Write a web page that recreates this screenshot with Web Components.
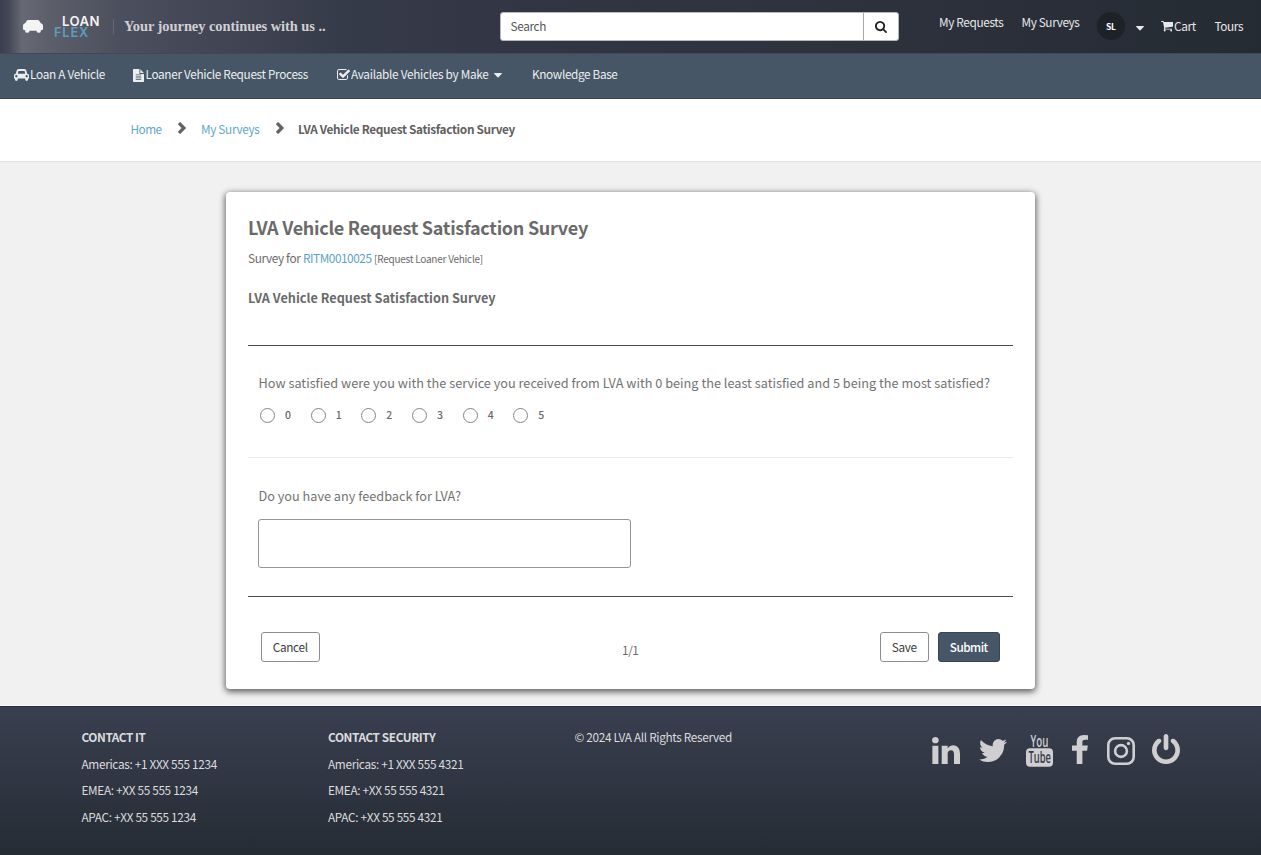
<!DOCTYPE html>
<html lang="en">
<head>
<meta charset="utf-8">
<title>LVA Vehicle Request Satisfaction Survey</title>
<style>
body{margin:0;font-family:"Noto Sans CJK SC","Noto Sans",sans-serif;font-size:11.8px;line-height:20px;background:#f1f1f1;color:#666}
</style>
</head>
<body>
<portal-app></portal-app>
<script>
const define = (name, html, ready) => {
  const t = document.createElement('template');
  t.innerHTML = html;
  customElements.define(name, class extends HTMLElement {
    connectedCallback() {
      if (this.shadowRoot) return;
      this.attachShadow({mode: 'open'}).append(t.content.cloneNode(true));
      if (ready) ready(this, this.shadowRoot);
    }
  });
};

/* A single line of text tracked to a fixed measure (w, in px). */
define('fit-text', `<style>:host{display:block;white-space:nowrap;flex:none}span{display:inline-block}</style><span><slot></slot></span>`, (el, root) => {
  const target = parseFloat(el.getAttribute('w'));
  const span = root.querySelector('span');
  if (!target) return;
  const n = el.textContent.length;
  span.style.letterSpacing = ((target - .5 - span.getBoundingClientRect().width) / n) + 'px';
  el.style.width = target + 'px';
});

/* Icons: [viewBox, markup] */
const ICONS = {
  search: ['64 128 1664 1664', '<path d="M1216 832q0-185-131.5-316.5t-316.5-131.5-316.5 131.5-131.5 316.5 131.5 316.5 316.5 131.5 316.5-131.5 131.5-316.5zm512 832q0 52-38 90t-90 38q-54 0-90-38l-343-342q-179 124-399 124-143 0-273.5-55.5t-225-150-150-225-55.5-273.5 55.5-273.5 150-225 225-150 273.5-55.5 273.5 55.5 225 150 150 225 55.5 273.5q0 220-124 399l343 343q37 37 37 90z"/>'],
  twitter: ['108 256 1576 1280', '<path d="M1684 408q-67 98-162 167 1 14 1 42 0 130-38 259.5t-115.5 248.5-184.5 210.5-258 146-323 54.5q-271 0-496-145 35 4 78 4 225 0 401-138-105-2-188-64.5t-114-159.5q33 5 61 5 43 0 85-11-112-23-185.5-111.5t-73.5-205.5v-4q68 38 146 41-66-44-105-115t-39-154q0-88 44-163 121 149 294.5 238.5t371.5 99.5q-8-38-8-74 0-134 94.5-228.5t228.5-94.5q140 0 236 102 109-21 205-78-37 115-142 178 93-10 186-50z"/>'],
  facebook: ['479 0 864 1664', '<path d="M1343 12v264h-157q-86 0-116 36t-30 108v189h293l-39 296h-254v759h-306v-759h-255v-296h255v-218q0-186 104-288.5t277-102.5q147 0 228 12z"/>'],
  linkedin: ['127 148 1537 1468', '<path d="M477 625v991h-330v-991h330zm21-306q1 73-50.5 122t-135.5 49h-2q-82 0-132-49t-50-122q0-74 51.5-122.5t134.5-48.5 133 48.5 51 122.5zm1166 729v568h-329v-530q0-105-40.5-164.5t-126.5-59.5q-63 0-105.5 34.5t-63.5 85.5q-11 30-11 81v553h-329q2-399 2-647t-1-296l-1-48h329v144h-2q20-32 41-56t56.5-52 87-43.5 114.5-15.5q171 0 275 113.5t104 332.5z"/>'],
  power: ['128 0 1536 1664', '<path d="M1664 896q0 156-61 298t-164 245-245 164-298 61-298-61-245-164-164-245-61-298q0-182 80.5-343t226.5-270q43-32 95.5-25t83.5 50q32 42 24.5 94.5t-49.5 84.5q-98 74-151.5 181t-53.5 228q0 104 40.5 198.5t109.5 163.5 163.5 109.5 198.5 40.5 198.5-40.5 163.5-109.5 109.5-163.5 40.5-198.5q0-121-53.5-228t-151.5-181q-42-32-49.5-84.5t24.5-94.5q31-43 84-50t95 25q146 109 226.5 270t80.5 343zm-640-768v640q0 52-38 90t-90 38-90-38-38-90v-640q0-52 38-90t90-38 90 38 38 90z"/>'],
  instagram: ['0 0 28 28', '<rect x="1.3" y="1.3" width="25.4" height="25.4" rx="6.8" fill="none" stroke="currentColor" stroke-width="2.6"/><circle cx="14" cy="14" r="5.9" fill="none" stroke="currentColor" stroke-width="2.6"/><circle cx="21.5" cy="6.5" r="1.7"/>'],
  youtube: ['0 0 27 33', '<g font-family="Open Sans" font-weight="600"><text x="4.6" y="12.700" font-size="17" textLength="17.8" lengthAdjust="spacingAndGlyphs">You</text><rect y="14.200" width="27" height="18.500" rx="4"/><text x="2.4" y="29.2" font-size="15.800" textLength="22.5" lengthAdjust="spacingAndGlyphs" fill="#373c4b">Tube</text></g>'],
  cart: ['64 256 1664 1408', '<path d="M704 1536q0 52-38 90t-90 38-90-38-38-90 38-90 90-38 90 38 38 90zm896 0q0 52-38 90t-90 38-90-38-38-90 38-90 90-38 90 38 38 90zm128-1088v512q0 24-16.5 42.5t-40.5 21.5l-1044 122q13 60 13 70 0 16-24 64h920q26 0 45 19t19 45-19 45-45 19h-1024q-26 0-45-19t-19-45q0-11 8-31.5t16-36 21.5-40 15.5-29.5l-177-823h-204q-26 0-45-19t-19-45 19-45 45-19h256q16 0 28.5 6.5t19.5 15.5 13 24.5 8 26 5.5 29.5 4.5 26h1201q26 0 45 19t19 45z"/>'],
  check: ['64 128 1664 1408', '<path d="M1472 930v318q0 119-84.5 203.5t-203.5 84.5h-832q-119 0-203.5-84.5t-84.5-203.5v-832q0-119 84.5-203.5t203.5-84.5h832q63 0 117 25 15 7 18 23 3 17-9 29l-49 49q-10 10-23 10-3 0-9-2-23-6-45-6h-832q-66 0-113 47t-47 113v832q0 66 47 113t113 47h832q66 0 113-47t47-113v-254q0-13 9-22l64-64q10-10 23-10 6 0 12 3 20 8 20 29zm231-489l-814 814q-24 24-57 24t-57-24l-430-430q-24-24-24-57t24-57l110-110q24-24 57-24t57 24l263 263 647-647q24-24 57-24t57 24l110 110q24 24 24 57t-24 57z"/>'],
  car: ['0 128 2048 1600', '<path d="M480 1088q0-66-47-113t-113-47-113 47-47 113 47 113 113 47 113-47 47-113zm36-320h1016l-89-357q-2-8-14-17.5t-21-9.5h-768q-9 0-21 9.5t-14 17.5zm1372 320q0-66-47-113t-113-47-113 47-47 113 47 113 113 47 113-47 47-113zm160-96v384q0 14-9 23t-23 9h-96v128q0 80-56 136t-136 56-136-56-56-136v-128h-1024v128q0 80-56 136t-136 56-136-56-56-136v-128h-96q-14 0-23-9t-9-23v-384q0-93 65.5-158.5t158.5-65.5h28l105-419q23-94 104-157.5t179-63.5h768q98 0 179 63.5t104 157.5l105 419h28q93 0 158.5 65.5t65.5 158.5z"/>'],
  file: ['0 0 12 13', '<path fill-rule="evenodd" d="M.7 0H7v4.3c0 .4.2.6.6.6H12v7.4c0 .4-.3.7-.7.7H.7a.7.7 0 0 1-.7-.7V.7C0 .3.3 0 .7 0zM3 5.4v.9h6v-.9zm0 2.2v.9h6v-.9zm0 2.2v.9h6v-.9z"/><path d="M8 .2 11.800 4H8z"/>'],
  chevron: ['346 109 1036 1529', '<path d="M1363 919l-700 700q-19 19-45 19t-45-19l-208-208q-19-19-19-45t19-45l447-447-447-447q-19-19-19-45t19-45l208-208q19-19 45-19t45 19l700 700q19 19 19 45t-19 45z"/>'],
  caret: ['0 0 8 4.500', '<path d="M.5 0h7q.8.1.3.8L4.500 4.200q-.5.500-1 0L.2.8Q-.3.1.5 0z"/>'],
  auto: ['0 0 20 13', '<path d="M5.500 0h9q1.300 0 1.900 1l1.200 2q2.400.8 2.400 2.400v3q0 1.500-1 1.700l-1.200.2v1q0 1.500-2 1.500t-2.200-1.500v-.6H6.400v.6q0 1.500-2.200 1.500t-2-1.500v-1L1 10.100Q0 9.900 0 8.400v-3Q0 3.800 2.400 3l1.200-2Q4.200 0 5.500 0z"/>']
};
define('ui-icon', `<style>:host{display:block;flex:none}svg{display:block;width:100%;height:100%;fill:currentColor;overflow:visible}</style>`, (el, root) => {
  const [vb, body] = ICONS[el.getAttribute('name')];
  const [w, h] = el.getAttribute('size').split('x');
  el.style.width = w + 'px';
  el.style.height = h + 'px';
  root.innerHTML += `<svg viewBox="${vb}" preserveAspectRatio="none">${body}</svg>`;
});

define('brand-logo', `<style>
:host{display:flex;align-items:flex-start;padding-left:23px;color:#f4f4f5;width:476.500px;flex:none;box-sizing:content-box}
ui-icon{margin-top:20px}
.n{margin:16px 0 0 11px;width:46px;font:600 13.200px/11px Inter,sans-serif}
.a{margin-left:8px}.b{color:#5b9fbe;font-size:12.800px}
i{width:1px;height:15px;background:#646875;margin:19px 10px 0 13px}
.t{font:bold 14.500px/20px "Liberation Serif",serif;color:#d0d0d3;margin-top:16px}
</style><ui-icon name="auto" size="20x13"></ui-icon><div class="n"><fit-text class="a" w="38.500">LOAN</fit-text><fit-text class="b" w="35.500">FLEX</fit-text></div><i></i><fit-text class="t" w="202">Your journey continues with us ..</fit-text>`);

define('search-box', `<style>
:host{display:flex;box-sizing:border-box;width:399px;height:29px;margin-top:12px;border:1px solid #b5b8bd;border-radius:3px;background:#fff;overflow:hidden;flex:none;color:#555}
.f{flex:1;padding:3px 10px}.b{width:34px;border-left:1px solid #aaa;display:flex;align-items:center;justify-content:center;color:#222}
</style><div class="f"><fit-text w="36">Search</fit-text></div><div class="b"><ui-icon name="search" size="12x12"></ui-icon></div>`);

define('top-bar', `<style>
:host{display:flex;align-items:flex-start;height:53px;color:#e6e8ea;background:linear-gradient(90deg,#3a3e4e 0,#454857 9px,#666873 22px,#5c5e6a 50px,#4c4f5d 120px,#404453 230px,#363b49 340px,#323644 520px,#2d323d 850px,#252b33 100%)}
.m{margin-top:12px}.c{margin-top:16px}
.av{width:28px;height:28px;border-radius:50%;background:#1d2229;margin:12px 0 0 17px;display:flex;align-items:center;justify-content:center;font-size:8.500px;font-weight:700;color:#fff}
.av fit-text{margin-top:-1px}
</style><brand-logo></brand-logo><search-box></search-box>
<fit-text class="m" style="margin-left:40.500px" w="65">My Requests</fit-text>
<fit-text class="m" style="margin-left:17.500px" w="58.500">My Surveys</fit-text>
<div class="av"><fit-text w="10">SL</fit-text></div>
<ui-icon name="caret" size="8x4.500" style="margin:26px 0 0 10.500px"></ui-icon>
<ui-icon name="cart" size="12x10.500" style="margin:21px 0 0 17px"></ui-icon>
<fit-text class="c" style="margin-left:1.500px" w="22.500">Cart</fit-text>
<fit-text class="c" style="margin-left:18px" w="29">Tours</fit-text>`);

define('nav-bar', `<style>
:host{display:flex;align-items:center;border-bottom:1px solid #36424f;background:#465666;color:#eceeef;padding:0 0 0 14px;border-top:1px solid #3d4b59;box-sizing:border-box;height:46px}
div{display:flex;align-items:center;padding-bottom:2px}
fit-text{margin-top:-2px}
</style>
<div style="width:119px"><ui-icon name="car" size="15x12" style="margin-right:1px"></ui-icon><fit-text w="75.500">Loan A Vehicle</fit-text></div>
<div style="width:203px"><ui-icon name="file" size="11x13" style="margin-right:1.500px"></ui-icon><fit-text w="163">Loaner Vehicle Request Process</fit-text></div>
<div style="width:196px"><ui-icon name="check" size="13x11" style="margin:-1px 1px 0 1px"></ui-icon><fit-text w="138">Available Vehicles by Make</fit-text><ui-icon name="caret" size="8x4.500" style="margin:1px 0 0 5px"></ui-icon></div>
<div><fit-text w="86">Knowledge Base</fit-text></div>`);

define('bread-crumbs', `<style>
:host{display:flex;align-items:center;height:63px;box-sizing:border-box;background:#fff;border-bottom:1px solid #dbe2e6;padding:0 0 2px 130.500px;color:#5fa8c8}
ui-icon{color:#616161}b{color:#616161}fit-text{margin-top:-1px}
</style><fit-text w="31.500">Home</fit-text><ui-icon name="chevron" size="8x12" style="margin:0 15px 2px 16px"></ui-icon><fit-text w="59">My Surveys</fit-text><ui-icon name="chevron" size="8x12" style="margin:0 14px 2px 16px"></ui-icon><b><fit-text w="217.500">LVA Vehicle Request Satisfaction Survey</fit-text></b>`);

define('ui-button', `<style>
:host{display:flex;box-sizing:border-box;height:30px;border:1px solid #8d8d8d;border-radius:3px;background:#fff;color:#3c3c3c;justify-content:center;padding-top:4px;flex:none}
:host([primary]){background:#465666;border-color:#364658;color:#fff;font-weight:500}
</style><slot></slot>`);

define('rating-scale', `<style>
:host{display:flex;font-size:10.500px;font-weight:500}
label{display:flex;align-items:center;width:50.670px;height:20px}
i{width:13px;height:13px;border:1px solid #858585;border-radius:50%;margin-right:10px}
</style>`, (el, root) => {
  for (let n = 0; n <= +el.getAttribute('max'); n++) root.innerHTML += `<label><i></i><fit-text w="7">${n}</fit-text></label>`;
});

define('survey-card', `<style>
:host{display:block;box-sizing:border-box;width:809px;height:497px;margin:30px 0 0 226px;background:#fff;border-radius:4px;box-shadow:0 2px 6px 1px rgba(0,0,0,.6);padding:21px 22px 0;color:#6a6a6a}
.h{font-size:18px;font-weight:700;line-height:28px}
.s{display:flex;padding-top:7px;height:20px}
.s a{color:#5aa3c4;margin:0 2px}
.b{font-weight:700;font-size:12.700px;margin-top:20px}
hr{border:0;height:1px;margin:0;background:#4c4c4c}
.q{font-size:12.700px;color:#727272;margin-left:10.500px}
.ta{box-sizing:border-box;width:373px;height:49px;border:1px solid #949494;border-radius:3px;margin:13px 0 28px 10px}
footer{display:flex;align-items:flex-start;padding:35px 14px 0 13px}
</style>
<fit-text class="h" w="340.500">LVA Vehicle Request Satisfaction Survey</fit-text>
<div class="s"><fit-text w="53">Survey for</fit-text><a><fit-text w="69">RITM0010025</fit-text></a><fit-text w="109.500" style="font-size:10px;margin-top:1px">[Request Loaner Vehicle]</fit-text></div>
<fit-text class="b" w="248">LVA Vehicle Request Satisfaction Survey</fit-text>
<hr style="margin-top:37px">
<fit-text class="q" style="margin-top:27px" w="732">How satisfied were you with the service you received from LVA with 0 being the least satisfied and 5 being the most satisfied?</fit-text>
<rating-scale max="5" style="margin:12px 0 32px 12px"></rating-scale>
<hr style="background:#ebebeb">
<fit-text class="q" style="margin-top:28px" w="203">Do you have any feedback for LVA?</fit-text>
<div class="ta"></div><hr>
<footer><ui-button style="width:59px"><fit-text w="35.500">Cancel</fit-text></ui-button><fit-text w="17" style="margin:8px 241px 0 302px">1/1</fit-text><ui-button style="width:49px"><fit-text w="25.500">Save</fit-text></ui-button><ui-button primary style="width:62px;margin-left:9px"><fit-text w="38.500">Submit</fit-text></ui-button></footer>`);

define('contact-list', `<style>:host{display:block;width:246.500px;flex:none}::slotted(*){margin-bottom:6.700px}</style><slot></slot>`);

define('page-footer', `<style>
:host{display:flex;box-sizing:border-box;height:149px;border-top:1px solid #2b3040;background:linear-gradient(#3a3f50,#252c34);color:#dcdcde;padding:20px 0 0 81.500px}
nav{display:flex;align-items:flex-start;color:#cfcfd1;margin:1px 0 0 199.500px}
</style>
<contact-list><fit-text style="font-weight:700" w="64.500">CONTACT IT</fit-text><fit-text w="136">Americas: +1 XXX 555 1234</fit-text><fit-text w="117">EMEA: +XX 55 555 1234</fit-text><fit-text w="115">APAC: +XX 55 555 1234</fit-text></contact-list>
<contact-list><fit-text style="font-weight:700" w="108">CONTACT SECURITY</fit-text><fit-text w="136">Americas: +1 XXX 555 4321</fit-text><fit-text w="117">EMEA: +XX 55 555 4321</fit-text><fit-text w="115">APAC: +XX 55 555 4321</fit-text></contact-list>
<fit-text w="158">© 2024 LVA All Rights Reserved</fit-text>
<nav><ui-icon name="linkedin" size="28x27" style="margin-top:9px"></ui-icon><ui-icon name="twitter" size="28x23" style="margin:11px 0 0 19px"></ui-icon><ui-icon name="youtube" size="27x33" style="margin:6px 0 0 19px"></ui-icon><ui-icon name="facebook" size="16x29" style="margin:7px 0 0 19px"></ui-icon><ui-icon name="instagram" size="28x28" style="margin:9px 0 0 19px"></ui-icon><ui-icon name="power" size="28x30" style="margin:6px 0 0 17px"></ui-icon></nav>`);

define('portal-app', `<style>:host{display:flex;flex-direction:column;height:855px;overflow:hidden}main{flex:1;background:#f1f1f1;overflow:hidden;box-sizing:border-box;border-bottom:1px solid #fafafa}</style>
<top-bar></top-bar><nav-bar></nav-bar><bread-crumbs></bread-crumbs><main><survey-card></survey-card></main><page-footer></page-footer>`);
</script>
</body>
</html>
